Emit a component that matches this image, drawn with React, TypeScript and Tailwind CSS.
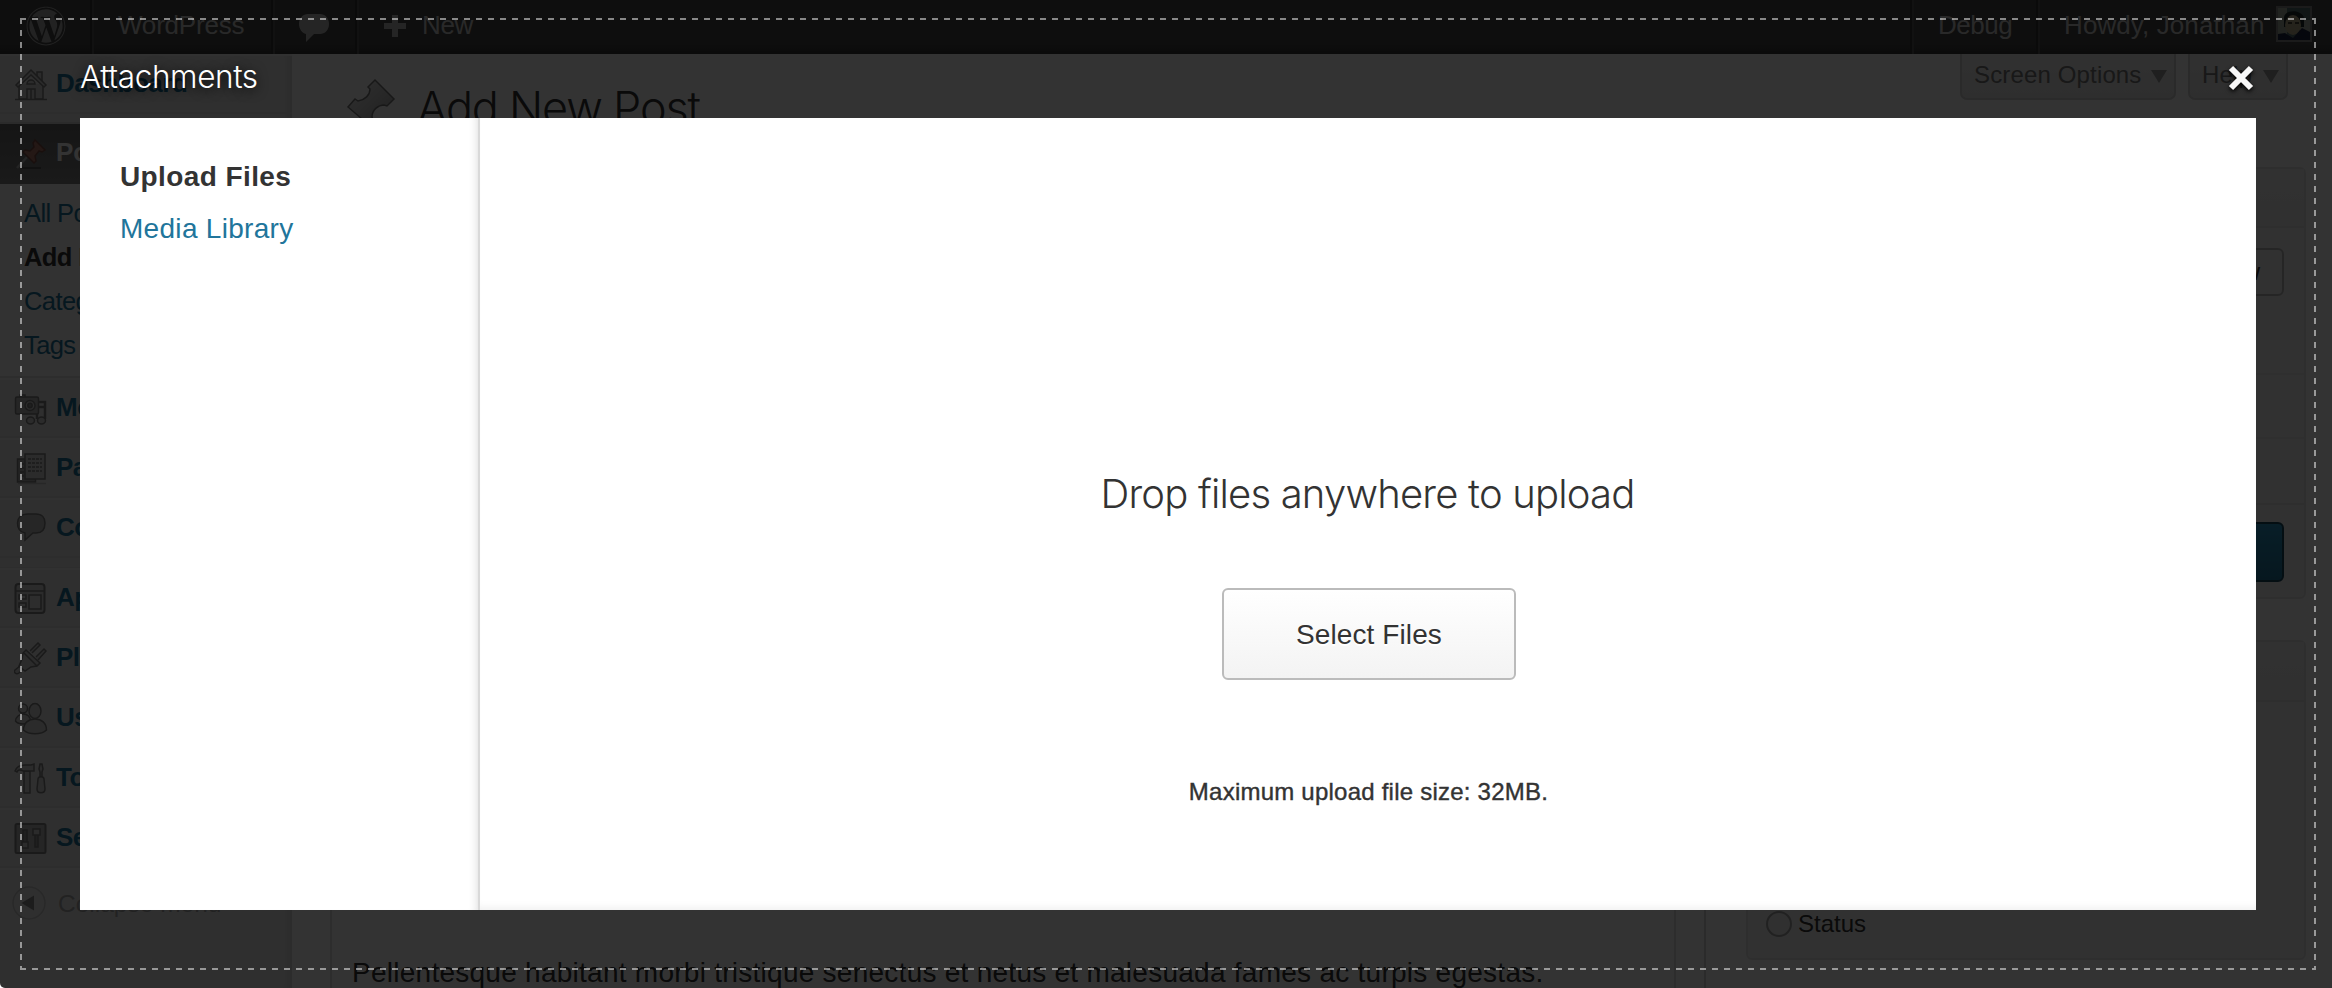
import React from "react";
import { FaWordpress } from "react-icons/fa";

const stroke = { fill: "#d4d4d4", stroke: "#808080", strokeWidth: 1.5 } as const;

function DashboardIcon() {
  return (
    <svg width="34" height="34" viewBox="0 0 34 34" {...stroke}>
      <path d="M23 8V4h5v9" />
      <path d="M5 16v15h24V16" />
      <path d="M2 17 17 2l15 15-2 2L17 7 4 19z" />
      <path d="M13 16a4 4 0 0 1 8 0z" />
      <path d="M13 31V21h8v10M17 21v10M1 31.5h32" />
    </svg>
  );
}

function PostsIcon() {
  return (
    <svg width="34" height="34" viewBox="0 0 34 34">
      <path d="M3 31 13 20" stroke="#b5b5b5" strokeWidth="2.5" />
      <path d="M8 31h19" stroke="#4a4a4a" strokeWidth="1.5" />
      <path d="m21 3 10 10-3 2-3-1-4 5 1 5-2 2L9 15l2-2 5 1 4-4-1-4z" fill="#b3796c" stroke="#7c4c42" strokeWidth="1.5" />
    </svg>
  );
}

function MediaIcon() {
  return (
    <svg width="34" height="34" viewBox="0 0 34 34" {...stroke}>
      <path d="M23 10h8v17M31 15h-8M23 9v18" fill="none" strokeWidth="2.5" />
      <path d="M6 3h5v3H6z" />
      <rect x="1.500" y="5" width="23" height="17" rx="1.500" fill="#b8b8b8" />
      <circle cx="16" cy="13.500" r="5" />
      <circle cx="16" cy="13.500" r="2.200" fill="#999" />
      <ellipse cx="16.500" cy="28.500" rx="4" ry="3.500" />
      <ellipse cx="27.500" cy="28.500" rx="4" ry="3.500" />
    </svg>
  );
}

function PagesIcon() {
  return (
    <svg width="34" height="34" viewBox="0 0 34 34" {...stroke}>
      <rect x="3.500" y="7" width="18" height="23" fill="#b0b0b0" />
      <path d="M6 12h4M6 16h4M6 20h4M6 24h4" />
      <rect x="11" y="2" width="20" height="25" />
      <path d="M14 7h14M14 11h14M14 15h14M14 19h14" strokeDasharray="3 1" />
      <path d="M4 31.500h28" stroke="#c0c0c0" />
    </svg>
  );
}

function CommentsIcon() {
  return (
    <svg width="34" height="34" viewBox="0 0 34 34" {...stroke}>
      <path d="M14 2h8c6 0 9 4 9 9 0 6-3 10-9 10h-3l-8 7v-7C6 20 3.500 16 3.500 11 3.500 6 7 2 14 2z" fill="#bdbdbd" />
    </svg>
  );
}

function AppearanceIcon() {
  return (
    <svg width="34" height="34" viewBox="0 0 34 34" {...stroke}>
      <rect x="1.500" y="2" width="29" height="29" rx="3" strokeWidth="2" />
      <path d="M2 9h28" />
      <path d="M5 13h7v4H5zM5 21h7v4H5zM15 13h12v14H15z" fill="#dedede" />
    </svg>
  );
}

function PluginsIcon() {
  return (
    <svg width="34" height="34" viewBox="0 0 34 34" {...stroke}>
      <path d="m1 28 5-4 3 3-4 4c-3 2-6-1-4-3z" />
      <path d="m16 9 8-8 2 2-8 8M22 15l8-8 2 2-8 9" />
      <path d="m12 8 14 13-3 3-6 1-6 4-6-5 3-7 1-6z" />
      <path d="m10 11 13 13" />
    </svg>
  );
}

function UsersIcon() {
  return (
    <svg width="34" height="34" viewBox="0 0 34 34" {...stroke}>
      <circle cx="9" cy="6.500" r="4.500" />
      <path d="M1.500 19c0-4 4-7 8-7s7 3 7 7c-3 4-12 4-15 0z" />
      <ellipse cx="21" cy="9" rx="6" ry="7.500" />
      <path d="M9.500 28c0-7 5-11 11.500-11s11.500 4 11.500 11c-5 5-18 5-23 0z" />
    </svg>
  );
}

function ToolsIcon() {
  return (
    <svg width="34" height="34" viewBox="0 0 34 34" {...stroke}>
      <path d="M10 9h6v22h-6z" />
      <path d="M1 9c2-5 5-6 10-6h6l3-1v7H9C6 7 4 8 3 10z" />
      <path d="M26 2h2l1 5-1 3v5h-2v-5l-1-3z" />
      <path d="M24 17c0-3 6-3 6 0l1 10c0 5-8 5-8 0z" />
    </svg>
  );
}

function SettingsIcon() {
  return (
    <svg width="34" height="34" viewBox="0 0 34 34" {...stroke}>
      <rect x="1.500" y="2" width="30" height="29" rx="1.500" fill="#b8b8b8" strokeWidth="2" />
      <path d="M9 8h4v14H9zM21 12h3v13h-3z" fill="#999" />
      <path d="M8 20h6v6H8zM19 7h7v6h-7z" />
    </svg>
  );
}

function PushPinIcon() {
  return (
    <svg width="52" height="54" viewBox="0 0 52 54" fill="none" className="shrink-0">
      <defs>
        <linearGradient id="pin" x1="0" y1="0" x2="1" y2="1">
          <stop offset="0" stopColor="#f0f0f0" />
          <stop offset="1" stopColor="#9d9d9d" />
        </linearGradient>
      </defs>
      <path d="M29 2 48 21l-7 7-3-1c-6 0-12 5-12 12l1 4-4 4L2 29l7-8 3 2c7-1 12-6 12-12l-2-2z" fill="url(#pin)" stroke="#7a7a7a" strokeWidth="1.500" />
    </svg>
  );
}

function MenuRow({ icon, label }: { icon: React.ReactNode; label: string }) {
  return (
    <li className="flex h-[60px] items-start gap-[8px] border-t-2 border-[#f2f2f2] pl-[14px] font-bold text-[#21759b] shadow-[inset_0_-2px_0_#e2e2e2]">
      <span className="mt-[12px] w-[34px] shrink-0">{icon}</span>
      <span className="leading-[55px] tracking-[-0.5px]">{label}</span>
    </li>
  );
}

function AdminBar() {
  return (
    <header className="flex h-[54px] shrink-0 items-start justify-between bg-[linear-gradient(to_top,#373737_0,#464646_10px)] text-[26px] leading-[50px] text-[#ccc]">
      <div className="flex h-full">
        <div className="flex w-[92px] border-r-2 border-[#333] pl-[26px] pt-[6px]">
          <FaWordpress size={40} color="#aaa" />
        </div>
        <div className="w-[181px] border-l-2 border-r-2 border-l-[#555] border-r-[#333] pl-[24px] tracking-[-0.2px]">WordPress</div>
        <div className="w-[84px] border-l-2 border-r-2 border-l-[#555] border-r-[#333] pl-[24px] pt-[14px]">
          <svg width="30" height="28" viewBox="0 0 30 28" fill="#bbb">
            <path d="M9 0h12c5 0 9 4 9 10s-4 10-9 10h-6l-8 8v-8C3 19 0 15 0 10 0 4 4 0 9 0z" />
          </svg>
        </div>
        <div className="flex items-start gap-[16px] border-l-2 border-[#555] pl-[25px]">
          <svg width="22" height="22" viewBox="0 0 22 22" fill="#bbb" className="mt-[15px]">
            <path d="M8 0h6v8h8v6h-8v8H8v-8H0V8h8z" />
          </svg>
          <span className="tracking-[-0.4px]">New</span>
        </div>
      </div>
      <div className="flex h-full">
        <div className="w-[126px] border-l-2 border-[#555] pl-[24px] tracking-[-0.5px] shadow-[-2px_0_0_#333]">Debug</div>
        <div className="flex w-[294px] border-l-2 border-[#555] pl-[24px] shadow-[-2px_0_0_#333]">
          <span className="w-[212px] whitespace-nowrap tracking-[0.1px]">Howdy, Jonathan</span>
          <svg width="36" height="36" viewBox="0 0 36 36" className="mt-[6px] shrink-0">
            <rect width="36" height="36" fill="#888" />
            <path d="M2 2h32v32H2z" fill="#52706f" />
            <path d="M2 2h9v32H2z" fill="#a3ad9e" />
            <path d="M24 14h10v12H24z" fill="#a9b3a8" />
            <path d="M8 12c0-9 18-9 20 0v9H8z" fill="#1d2a2c" />
            <ellipse cx="17" cy="19" rx="8" ry="10" fill="#b9ad8b" />
            <path d="M12 17h4M19 17h4" stroke="#4a4639" strokeWidth="2" />
            <path d="M2 34v-6l7-1 8 5 9-10 8 4v8z" fill="#1c2440" />
          </svg>
        </div>
      </div>
    </header>
  );
}

function AdminMenu() {
  return (
    <nav className="w-[292px] shrink-0 whitespace-nowrap bg-[#ececec] text-[26px] shadow-[inset_-10px_0_8px_-6px_#d6d6d6]">
      <ul>
        <MenuRow icon={<DashboardIcon />} label="Dashboard" />
        <li className="h-[10px] border-b-2 border-[#d5d5d5]" />
        <li className="flex h-[60px] items-center gap-[8px] bg-linear-to-b from-[#6a6a6a] to-[#828282] pl-[14px] font-bold text-white">
          <PostsIcon />
          <span className="-mt-1 leading-[56px]">Posts</span>
        </li>
        <li className="h-[192px] bg-[#f9f9f9] pl-[24px] pt-[7px] text-[25.5px] leading-[44px] tracking-[-0.6px] text-[#21759b]">
          <p>All Posts</p>
          <p className="font-bold text-[#333]">Add New</p>
          <p>Categories</p>
          <p>Tags</p>
        </li>
        <li className="h-[2px] bg-[#dedede]" />
        <MenuRow icon={<MediaIcon />} label="Media" />
        <MenuRow icon={<PagesIcon />} label="Pages" />
        <MenuRow icon={<CommentsIcon />} label="Comments" />
        <li className="h-[10px] border-b border-[#dedede]" />
        <MenuRow icon={<AppearanceIcon />} label="Appearance" />
        <MenuRow icon={<PluginsIcon />} label="Plugins" />
        <MenuRow icon={<UsersIcon />} label="Users" />
        <MenuRow icon={<ToolsIcon />} label="Tools" />
        <MenuRow icon={<SettingsIcon />} label="Settings" />
        <li className="flex items-start gap-[12px] border-t-2 border-[#f5f5f5] pl-[12px] pt-[16px] text-[24.5px] leading-[36px] text-[#aaa]">
          <svg width="34" height="34" viewBox="0 0 34 34">
            <circle cx="17" cy="17" r="16" fill="#e8e8e8" stroke="#c8c8c8" strokeWidth="1.500" />
            <path d="M22 9.500v15L9.500 17z" fill="#8c8c8c" />
          </svg>
          <span>Collapse menu</span>
        </li>
      </ul>
    </nav>
  );
}

function ScreenTab({ label, width }: { label: string; width: string }) {
  return (
    <div className={`flex h-[46px] items-center justify-between rounded-b-[7px] border-2 border-t-0 border-[#d0d0d0] bg-linear-to-b from-[#f1f1f1] to-[#e6e6e6] pl-[12px] pr-[7px] text-[24px] leading-[42px] text-[#777] ${width}`}>
      <span className="-mt-[2px] tracking-[0.15px]">{label}</span>
      <svg width="16" height="13" viewBox="0 0 16 13" fill="#999">
        <path d="M0 0h16L8 13z" />
      </svg>
    </div>
  );
}

function EditorPage() {
  return (
    <main className="flex min-w-0 grow flex-col bg-white">
      <div className="flex h-[113px] shrink-0 justify-between pl-[54px] pr-[44px]">
        <div className="flex gap-[19px] pt-[24px]">
          <PushPinIcon />
          <h1 className="whitespace-nowrap font-[Inter] text-[45px] font-light leading-[60px] tracking-[-1.2px] text-[#333]">Add New Post</h1>
        </div>
        <div className="flex gap-[12px]">
          <ScreenTab label="Screen Options" width="w-[216px]" />
          <ScreenTab label="Help" width="w-[100px]" />
        </div>
      </div>
      <div className="flex min-h-0 grow pl-[38px] pr-[26px]">
        <section className="flex w-[1346px] shrink-0 items-end border-x-2 border-[#dfdfdf] pl-[20px] text-[28px] leading-[34px] text-[#333]">
          <p className="-mb-[2px] whitespace-nowrap tracking-[0.26px]">
            Pellentesque habitant morbi tristique senectus et netus et malesuada fames ac turpis egestas.
          </p>
        </section>
        <div className="ml-[28px] w-[2px] shrink-0 bg-[#d4d4d4]" />
        <aside className="ml-[40px] flex grow flex-col gap-[41px] text-[24px] text-[#333]">
          <section className="flex h-[432px] shrink-0 flex-col rounded-[6px] border-2 border-[#e6e6e6] bg-[#f6f6f6]">
            <div className="h-[59px] border-b-2 border-[#e6e6e6] bg-linear-to-b from-[#f4f4f4] to-[#efefef]" />
            <div className="flex h-[147px] items-start justify-end border-b-2 border-[#ebebeb] pr-[20px] pt-[20px]">
              <button className="h-[48px] rounded-[6px] border-2 border-[#bbb] bg-[#f4f4f4] px-[22px] leading-[42px]">Preview</button>
            </div>
            <div className="h-[64px] border-b-2 border-[#ebebeb]" />
            <div className="h-[66px] border-b-2 border-[#e6e6e6]" />
            <div className="flex justify-end pr-[20px] pt-[17px]">
              <button className="h-[60px] rounded-[6px] border-2 border-[#17465c] bg-linear-to-b from-[#2a95c5] to-[#21759b] px-[26px] font-bold text-white">Publish</button>
            </div>
          </section>
          <section className="flex h-[320px] shrink-0 flex-col rounded-[6px] border-2 border-[#e6e6e6] bg-[#f6f6f6]">
            <div className="h-[60px] shrink-0 border-b-2 border-[#e6e6e6] bg-linear-to-b from-[#f4f4f4] to-[#efefef]" />
            <label className="mt-[205px] flex items-center gap-[5px] pl-[18px] leading-[32px]">
              <span className="size-[26px] rounded-full border-2 border-[#a5a5a5] bg-[#eee]" />
              <span className="pl-px pt-px">Status</span>
            </label>
          </section>
        </aside>
      </div>
    </main>
  );
}

/* Dashed outline of the drop zone: 6px dashes with 6px gaps along each edge. */
function DropZoneOutline() {
  return (
    <div className="pointer-events-none absolute bottom-[18px] left-[20px] right-[16px] top-[18px] flex flex-col">
      <div className="h-[2px] bg-[repeating-linear-gradient(to_right,#ffffff80_0_6px,transparent_6px_12px)]" />
      <div className="flex grow justify-between">
        <div className="w-[2px] bg-[repeating-linear-gradient(to_bottom,#ffffff80_0_4px,transparent_4px_10px,#ffffff80_10px_12px)]" />
        <div className="w-[2px] bg-[repeating-linear-gradient(to_bottom,#ffffff80_0_4px,transparent_4px_10px,#ffffff80_10px_12px)]" />
      </div>
      <div className="h-[2px] bg-[repeating-linear-gradient(to_right,#ffffff80_0_6px,transparent_6px_12px)]" />
    </div>
  );
}

function MediaModal() {
  return (
    <div className="absolute inset-0 flex flex-col bg-black/80 pb-[78px] pl-[80px] pr-[76px]">
      <DropZoneOutline />
      <div className="flex h-[118px] shrink-0 items-start justify-between pt-[56px]">
        <h2 className="font-[Inter] text-[31.5px] font-light leading-[42px] tracking-[-0.4px] text-white [text-shadow:0_2px_12px_#000]">Attachments</h2>
        <svg width="34" height="36" viewBox="0 0 34 36" className="mt-[4px] drop-shadow-[0_2px_2px_#000]">
          <path d="m9 8 20 20M29 8 9 28" stroke="#f8f8f8" strokeWidth="6" />
        </svg>
      </div>
      <div className="flex min-h-0 grow bg-white text-[28px] text-[#333]">
        <nav className="w-[400px] shrink-0 border-r-2 border-[#d9d9d9] pl-[40px] pt-[33px] leading-[52px] shadow-[inset_-8px_0_8px_-7px_#ddd]">
          <p className="font-bold tracking-[0.4px]">Upload Files</p>
          <p className="tracking-[0.3px] text-[#21759b]">Media Library</p>
        </nav>
        <section className="flex grow flex-col items-center pl-[2px] pt-[348px] shadow-[inset_0_-8px_8px_-6px_#eee]">
          <h3 className="pr-[3px] font-[Inter] text-[40px] font-light leading-[56px] tracking-[-0.8px]">Drop files anywhere to upload</h3>
          <button className="mt-[66px] h-[92px] w-[294px] rounded-[6px] border-2 border-[#bbb] bg-linear-to-b from-white to-[#f3f3f3] leading-[84px] tracking-[0.1px] [text-shadow:0_2px_0_#fff]">
            <span className="block pt-[2px]">Select Files</span>
          </button>
          <p className="mt-[94px] pr-[1px] text-[24px] leading-[36px] tracking-[0.23px] [-webkit-text-stroke:0.4px_#333]">Maximum upload file size: 32MB.</p>
        </section>
      </div>
    </div>
  );
}

export default function App() {
  return (
    <div className="relative flex h-[988px] w-[2332px] flex-col overflow-hidden rounded-bl-[5px] bg-white font-['Liberation_Sans',Arial,sans-serif]">
      <AdminBar />
      <div className="flex min-h-0 grow">
        <AdminMenu />
        <EditorPage />
      </div>
      <MediaModal />
    </div>
  );
}
